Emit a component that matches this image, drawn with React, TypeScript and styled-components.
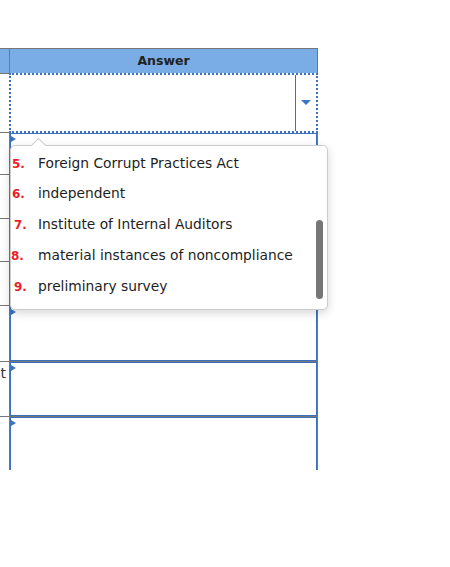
import React from 'react'
import styled, { createGlobalStyle } from 'styled-components'

const GlobalStyle = createGlobalStyle`
    html, body {
        margin: 0;
        padding: 0;
        background: #ffffff;
        font-family: 'DejaVu Sans', Verdana, sans-serif;
    }
`

const Page = styled.div`
    position: relative;
    padding-top: 48px;
    width: 450px;
    height: 567px;
    box-sizing: border-box;
`

const Viewport = styled.div`
    height: 422px;
    overflow: hidden;
    width: 318px;
`

const Table = styled.div`
    display: grid;
    grid-template-columns: 9px 307px;
    grid-template-rows: 24px 58px 41px 43px 42px 43px 55px 54px 80px;
    gap: 1px;
    background: #777777;
    border-top: 1px solid #777777;
    border-right: 1px solid #777777;
    width: 318px;
    box-sizing: border-box;
`

const HeadCell = styled.div`
    background: #7aade5;
    color: #222222;
    font-weight: bold;
    font-size: 12.5px;
    display: flex;
    align-items: center;
    justify-content: center;
    padding-bottom: 1px;
`

const SideCell = styled.div`
    background: #ffffff;
    overflow: hidden;
    color: #333333;
    font-size: 14px;
    line-height: 17px;
    text-align: right;
    padding: 3px 3px 0 0;
    box-sizing: border-box;
    white-space: nowrap;
`

const SelectCell = styled.div`
    background: #ffffff;
    display: flex;
    border: 2px dotted #3b72c0;
    margin: -1px;
    position: relative;
`

const SelectField = styled.div`
    flex: 1;
`

const Toggle = styled.div`
    width: 20px;
    border-left: 1px solid #4d6e9c;
    display: flex;
    align-items: center;
    justify-content: center;
`

const Caret = styled.span`
    width: 0;
    height: 0;
    border-left: 5px solid transparent;
    border-right: 5px solid transparent;
    border-top: 5px solid #3a76c4;
    margin-top: -2px;
`

const AnswerCell = styled.div`
    position: relative;
    background: #ffffff;
    border: 1px solid #3b70bd;
    box-sizing: border-box;
`

const Marker = styled.span`
    position: absolute;
    left: 0;
    top: 2px;
    width: 0;
    height: 0;
    border-left: 5px solid #3d73c4;
    border-top: 3.5px solid transparent;
    border-bottom: 3.5px solid transparent;
`

const Popup = styled.div`
    position: absolute;
    left: 10px;
    top: 145px;
    width: 318px;
    height: 165px;
    box-sizing: border-box;
    background: #ffffff;
    border: 1px solid #cccccc;
    border-radius: 5px;
    box-shadow: 0 3px 10px rgba(0, 0, 0, 0.16);
`

const Notch = styled.span`
    position: absolute;
    left: 22px;
    top: -6px;
    width: 10px;
    height: 10px;
    background: #ffffff;
    border-top: 1px solid #cccccc;
    border-left: 1px solid #cccccc;
    transform: rotate(45deg);
`

const List = styled.ul`
    list-style: none;
    margin: 0;
    padding: 1.5px 0 0;
    height: 100%;
    box-sizing: border-box;
    overflow: hidden;
    border-radius: 5px;
`

const Item = styled.li`
    display: flex;
    align-items: baseline;
    height: 30.75px;
    line-height: 30.75px;
    font-size: 13.8px;
    color: #1e1e1e;
    white-space: nowrap;
`

const Num = styled.span<{ shift: number }>`
    width: 27px;
    flex: none;
    padding-left: ${(p) => p.shift}px;
    box-sizing: border-box;
    color: #ee1d2a;
    font-weight: bold;
    font-size: 12px;
`

const Scrollbar = styled.span`
    position: absolute;
    left: 305px;
    top: 74px;
    width: 7px;
    height: 79px;
    border-radius: 4px;
    background: #767676;
`

const options = [
    { n: '5.', label: 'Foreign Corrupt Practices Act', shift: 1 },
    { n: '6.', label: 'independent', shift: 1 },
    { n: '7.', label: 'Institute of Internal Auditors', shift: 3 },
    { n: '8.', label: 'material instances of noncompliance', shift: -3 },
    { n: '9.', label: 'preliminary survey', shift: 3 },
    { n: '10.', label: 'quality control', shift: 0 },
]

const sideText = ['', '', '', '', '', 't', '']

export default function App() {
    return (
        <>
            <GlobalStyle />
            <Page>
                <Viewport>
                    <Table>
                        <HeadCell />
                        <HeadCell>Answer</HeadCell>
                        <SideCell />
                        <SelectCell>
                            <SelectField />
                            <Toggle>
                                <Caret />
                            </Toggle>
                        </SelectCell>
                        {sideText.map((text, idx) => (
                            <React.Fragment key={idx}>
                                <SideCell>{text}</SideCell>
                                <AnswerCell>
                                    <Marker />
                                </AnswerCell>
                            </React.Fragment>
                        ))}
                    </Table>
                </Viewport>
                <Popup>
                    <Notch />
                    <List>
                        {options.map((opt) => (
                            <Item key={opt.n}>
                                <Num shift={opt.shift}>{opt.n}</Num>
                                {opt.label}
                            </Item>
                        ))}
                    </List>
                    <Scrollbar />
                </Popup>
            </Page>
        </>
    )
}
